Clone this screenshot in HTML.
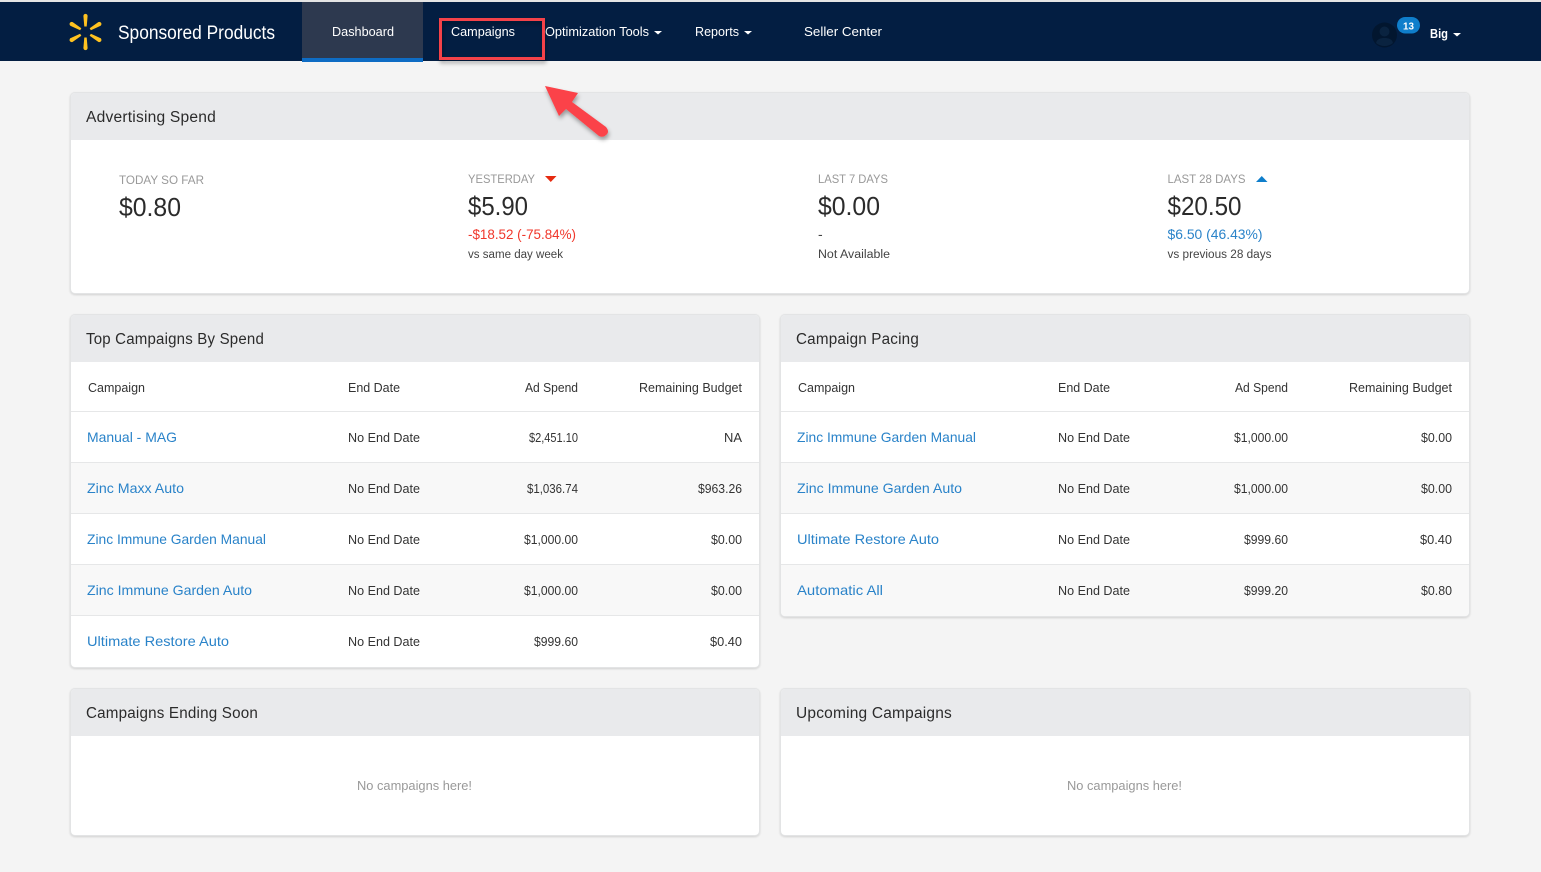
<!DOCTYPE html>
<html><head><meta charset="utf-8"><title>Sponsored Products</title>
<style>
html,body{margin:0;padding:0;width:1541px;height:872px;overflow:hidden;background:#f4f4f4}
.a{position:absolute;box-sizing:border-box}
.p{background:#fff;border-radius:5px;border:1px solid #e3e4e5;box-shadow:0 1px 2px rgba(0,0,0,.14)}
.h{background:#e9eaec;border-radius:4px 4px 0 0;left:0;right:0;top:0;height:47px}
svg{position:absolute;left:0;top:0}
text{font-family:"Liberation Sans",sans-serif;font-size:13px;fill:#333}
.n{fill:#fff;font-size:13px}
.t{font-size:15.5px;fill:#2b2b2b;letter-spacing:.2px}
.l{fill:#2a83c9;font-size:14px}
.g{fill:#999;font-size:12px}
.b{font-size:26px;fill:#2b2b2b}
.s{font-size:11.5px;fill:#444}
</style></head><body>
<div class="a" style="left:0;top:0;width:1541px;height:2px;background:#e4e4e4"></div>
<div class="a" style="left:0;top:2px;width:1541px;height:59px;background:#031e42"></div>
<div class="a" style="left:302px;top:2px;width:121px;height:60px;background:#2d394f;border-bottom:4px solid #0e6cc4"></div>

<div class="a p" style="left:70px;top:92px;width:1400px;height:202px"><div class="a h"></div></div>
<div class="a p" style="left:70px;top:314px;width:690px;height:354px"><div class="a h"></div>
 <div class="a" style="left:0;right:0;top:96px;height:1px;background:#e6e7e8"></div>
 <div class="a" style="left:0;right:0;top:147px;height:52px;background:#f8f8f8;border-top:1px solid #e6e7e8;border-bottom:1px solid #e6e7e8"></div>
 <div class="a" style="left:0;right:0;top:249px;height:52px;background:#f8f8f8;border-top:1px solid #e6e7e8;border-bottom:1px solid #e6e7e8"></div>
</div>
<div class="a p" style="left:780px;top:314px;width:690px;height:303px"><div class="a h"></div>
 <div class="a" style="left:0;right:0;top:96px;height:1px;background:#e6e7e8"></div>
 <div class="a" style="left:0;right:0;top:147px;height:52px;background:#f8f8f8;border-top:1px solid #e6e7e8;border-bottom:1px solid #e6e7e8"></div>
 <div class="a" style="left:0;right:0;top:249px;height:52px;background:#f8f8f8;border-top:1px solid #e6e7e8;border-bottom-left-radius:4px;border-bottom-right-radius:4px"></div>
</div>
<div class="a p" style="left:70px;top:688px;width:690px;height:148px"><div class="a h"></div></div>
<div class="a p" style="left:780px;top:688px;width:690px;height:148px"><div class="a h"></div></div>

<svg width="1541" height="872" viewBox="0 0 1541 872" xmlns="http://www.w3.org/2000/svg">
<defs><filter id="sh" x="-30%" y="-30%" width="160%" height="160%"><feDropShadow dx="1" dy="3" stdDeviation="2" flood-color="#000" flood-opacity=".35"/></filter>
<path id="sp" d="M-1.200 -5.500L1.200 -5.500L2.100 -16A2.100 2.100 0 0 0 -2.100 -16z" fill="#ffc220"/></defs>
<g transform="translate(85.5 32)">
<use href="#sp"/><use href="#sp" transform="rotate(60)"/><use href="#sp" transform="rotate(120)"/><use href="#sp" transform="rotate(180)"/><use href="#sp" transform="rotate(240)"/><use href="#sp" transform="rotate(300)"/>
</g>
<text x="118" y="39" class="n" style="font-size:19px" textLength="157" lengthAdjust="spacingAndGlyphs">Sponsored Products</text>
<text x="332" y="36" class="n" textLength="62" lengthAdjust="spacingAndGlyphs">Dashboard</text>
<text x="451" y="36" class="n" textLength="64" lengthAdjust="spacingAndGlyphs">Campaigns</text>
<text x="545" y="36" class="n" textLength="104" lengthAdjust="spacingAndGlyphs">Optimization Tools</text>
<path d="M654 31h8l-4 3.500z" fill="#fff"/>
<text x="695" y="36" class="n" textLength="44" lengthAdjust="spacingAndGlyphs">Reports</text>
<path d="M744 31h8l-4 3.500z" fill="#fff"/>
<text x="804" y="36" class="n" textLength="78" lengthAdjust="spacingAndGlyphs">Seller Center</text>
<circle cx="1384.500" cy="35" r="12.500" fill="#02162f"/>
<circle cx="1384.500" cy="31.500" r="5" fill="#0a2340"/>
<path d="M1376 43c1-4 4.500-5 8.500-5s7.500 1 8.500 5c-2.500 2-5.500 3-8.500 3s-6-1-8.500-3z" fill="#0a2340"/>
<rect x="1397" y="17" width="23" height="16.500" rx="8.250" fill="#0f7ecb"/>
<text x="1403" y="29.500" style="font-size:10px;font-weight:bold;fill:#fff" textLength="11" lengthAdjust="spacingAndGlyphs">13</text>
<text x="1430" y="38" class="n" style="font-weight:bold" textLength="18" lengthAdjust="spacingAndGlyphs">Big</text>
<path d="M1453 33h8l-4 3.500z" fill="#fff"/>

<rect x="440.500" y="19.500" width="103" height="39" fill="none" stroke="#f4424a" stroke-width="3" filter="url(#sh)"/>
<path d="M545 86L578 93L572 102L606 127Q610 132 606 135Q603 138 599 136L566 109L559 116z" fill="#fb4248" filter="url(#sh)"/>

<text x="86" y="122" class="t" textLength="130" lengthAdjust="spacingAndGlyphs">Advertising Spend</text>
<text x="119" y="184" class="g" textLength="85" lengthAdjust="spacingAndGlyphs">TODAY SO FAR</text>
<text x="119" y="216" class="b" textLength="62" lengthAdjust="spacingAndGlyphs">$0.80</text>
<text x="468" y="183" class="g" textLength="67" lengthAdjust="spacingAndGlyphs">YESTERDAY</text>
<path d="M545 176h11.500l-5.750 6z" fill="#e62a10"/>
<text x="468" y="215" class="b" textLength="60" lengthAdjust="spacingAndGlyphs">$5.90</text>
<text x="468" y="239" style="font-size:14px;fill:#f0372b" textLength="108" lengthAdjust="spacingAndGlyphs">-$18.52 (-75.84%)</text>
<text x="468" y="258" class="s" textLength="95" lengthAdjust="spacingAndGlyphs">vs same day week</text>
<text x="818" y="183" class="g" textLength="70" lengthAdjust="spacingAndGlyphs">LAST 7 DAYS</text>
<text x="818" y="215" class="b" textLength="62" lengthAdjust="spacingAndGlyphs">$0.00</text>
<text x="818" y="239" style="font-size:14px;fill:#444">-</text>
<text x="818" y="258" class="s" textLength="72" lengthAdjust="spacingAndGlyphs">Not Available</text>
<text x="1167.500" y="183" class="g" textLength="78" lengthAdjust="spacingAndGlyphs">LAST 28 DAYS</text>
<path d="M1256 182h11.500l-5.750-6z" fill="#0f7ecb"/>
<text x="1167.500" y="215" class="b" textLength="74" lengthAdjust="spacingAndGlyphs">$20.50</text>
<text x="1167.500" y="239" style="font-size:14px;fill:#2a83c9" textLength="95" lengthAdjust="spacingAndGlyphs">$6.50 (46.43%)</text>
<text x="1167.500" y="258" class="s" textLength="104" lengthAdjust="spacingAndGlyphs">vs previous 28 days</text>

<text x="86" y="344" class="t" textLength="178" lengthAdjust="spacingAndGlyphs">Top Campaigns By Spend</text>
<text x="88" y="392" textLength="57" lengthAdjust="spacingAndGlyphs">Campaign</text>
<text x="348" y="392" textLength="52" lengthAdjust="spacingAndGlyphs">End Date</text>
<text x="525" y="392" textLength="53" lengthAdjust="spacingAndGlyphs">Ad Spend</text>
<text x="639" y="392" textLength="103" lengthAdjust="spacingAndGlyphs">Remaining Budget</text>

<text x="87" y="442" class="l" textLength="90" lengthAdjust="spacingAndGlyphs">Manual - MAG</text>
<text x="348" y="442" textLength="72" lengthAdjust="spacingAndGlyphs">No End Date</text>
<text x="529" y="442" textLength="49" lengthAdjust="spacingAndGlyphs">$2,451.10</text>
<text x="724" y="442" textLength="18" lengthAdjust="spacingAndGlyphs">NA</text>

<text x="87" y="493" class="l" textLength="97" lengthAdjust="spacingAndGlyphs">Zinc Maxx Auto</text>
<text x="348" y="493" textLength="72" lengthAdjust="spacingAndGlyphs">No End Date</text>
<text x="527" y="493" textLength="51" lengthAdjust="spacingAndGlyphs">$1,036.74</text>
<text x="698" y="493" textLength="44" lengthAdjust="spacingAndGlyphs">$963.26</text>

<text x="87" y="544" class="l" textLength="179" lengthAdjust="spacingAndGlyphs">Zinc Immune Garden Manual</text>
<text x="348" y="544" textLength="72" lengthAdjust="spacingAndGlyphs">No End Date</text>
<text x="524" y="544" textLength="54" lengthAdjust="spacingAndGlyphs">$1,000.00</text>
<text x="711" y="544" textLength="31" lengthAdjust="spacingAndGlyphs">$0.00</text>

<text x="87" y="595" class="l" textLength="165" lengthAdjust="spacingAndGlyphs">Zinc Immune Garden Auto</text>
<text x="348" y="595" textLength="72" lengthAdjust="spacingAndGlyphs">No End Date</text>
<text x="524" y="595" textLength="54" lengthAdjust="spacingAndGlyphs">$1,000.00</text>
<text x="711" y="595" textLength="31" lengthAdjust="spacingAndGlyphs">$0.00</text>

<text x="87" y="646" class="l" textLength="142" lengthAdjust="spacingAndGlyphs">Ultimate Restore Auto</text>
<text x="348" y="646" textLength="72" lengthAdjust="spacingAndGlyphs">No End Date</text>
<text x="534" y="646" textLength="44" lengthAdjust="spacingAndGlyphs">$999.60</text>
<text x="710" y="646" textLength="32" lengthAdjust="spacingAndGlyphs">$0.40</text>

<text x="796" y="344" class="t" textLength="123" lengthAdjust="spacingAndGlyphs">Campaign Pacing</text>
<text x="798" y="392" textLength="57" lengthAdjust="spacingAndGlyphs">Campaign</text>
<text x="1058" y="392" textLength="52" lengthAdjust="spacingAndGlyphs">End Date</text>
<text x="1235" y="392" textLength="53" lengthAdjust="spacingAndGlyphs">Ad Spend</text>
<text x="1349" y="392" textLength="103" lengthAdjust="spacingAndGlyphs">Remaining Budget</text>

<text x="797" y="442" class="l" textLength="179" lengthAdjust="spacingAndGlyphs">Zinc Immune Garden Manual</text>
<text x="1058" y="442" textLength="72" lengthAdjust="spacingAndGlyphs">No End Date</text>
<text x="1234" y="442" textLength="54" lengthAdjust="spacingAndGlyphs">$1,000.00</text>
<text x="1421" y="442" textLength="31" lengthAdjust="spacingAndGlyphs">$0.00</text>

<text x="797" y="493" class="l" textLength="165" lengthAdjust="spacingAndGlyphs">Zinc Immune Garden Auto</text>
<text x="1058" y="493" textLength="72" lengthAdjust="spacingAndGlyphs">No End Date</text>
<text x="1234" y="493" textLength="54" lengthAdjust="spacingAndGlyphs">$1,000.00</text>
<text x="1421" y="493" textLength="31" lengthAdjust="spacingAndGlyphs">$0.00</text>

<text x="797" y="544" class="l" textLength="142" lengthAdjust="spacingAndGlyphs">Ultimate Restore Auto</text>
<text x="1058" y="544" textLength="72" lengthAdjust="spacingAndGlyphs">No End Date</text>
<text x="1244" y="544" textLength="44" lengthAdjust="spacingAndGlyphs">$999.60</text>
<text x="1420" y="544" textLength="32" lengthAdjust="spacingAndGlyphs">$0.40</text>

<text x="797" y="595" class="l" textLength="86" lengthAdjust="spacingAndGlyphs">Automatic All</text>
<text x="1058" y="595" textLength="72" lengthAdjust="spacingAndGlyphs">No End Date</text>
<text x="1244" y="595" textLength="44" lengthAdjust="spacingAndGlyphs">$999.20</text>
<text x="1421" y="595" textLength="31" lengthAdjust="spacingAndGlyphs">$0.80</text>

<text x="86" y="718" class="t" textLength="172" lengthAdjust="spacingAndGlyphs">Campaigns Ending Soon</text>
<text x="796" y="718" class="t" textLength="156" lengthAdjust="spacingAndGlyphs">Upcoming Campaigns</text>
<text x="357" y="790" style="fill:#999" textLength="115" lengthAdjust="spacingAndGlyphs">No campaigns here!</text>
<text x="1067" y="790" style="fill:#999" textLength="115" lengthAdjust="spacingAndGlyphs">No campaigns here!</text>
</svg>
</body></html>
